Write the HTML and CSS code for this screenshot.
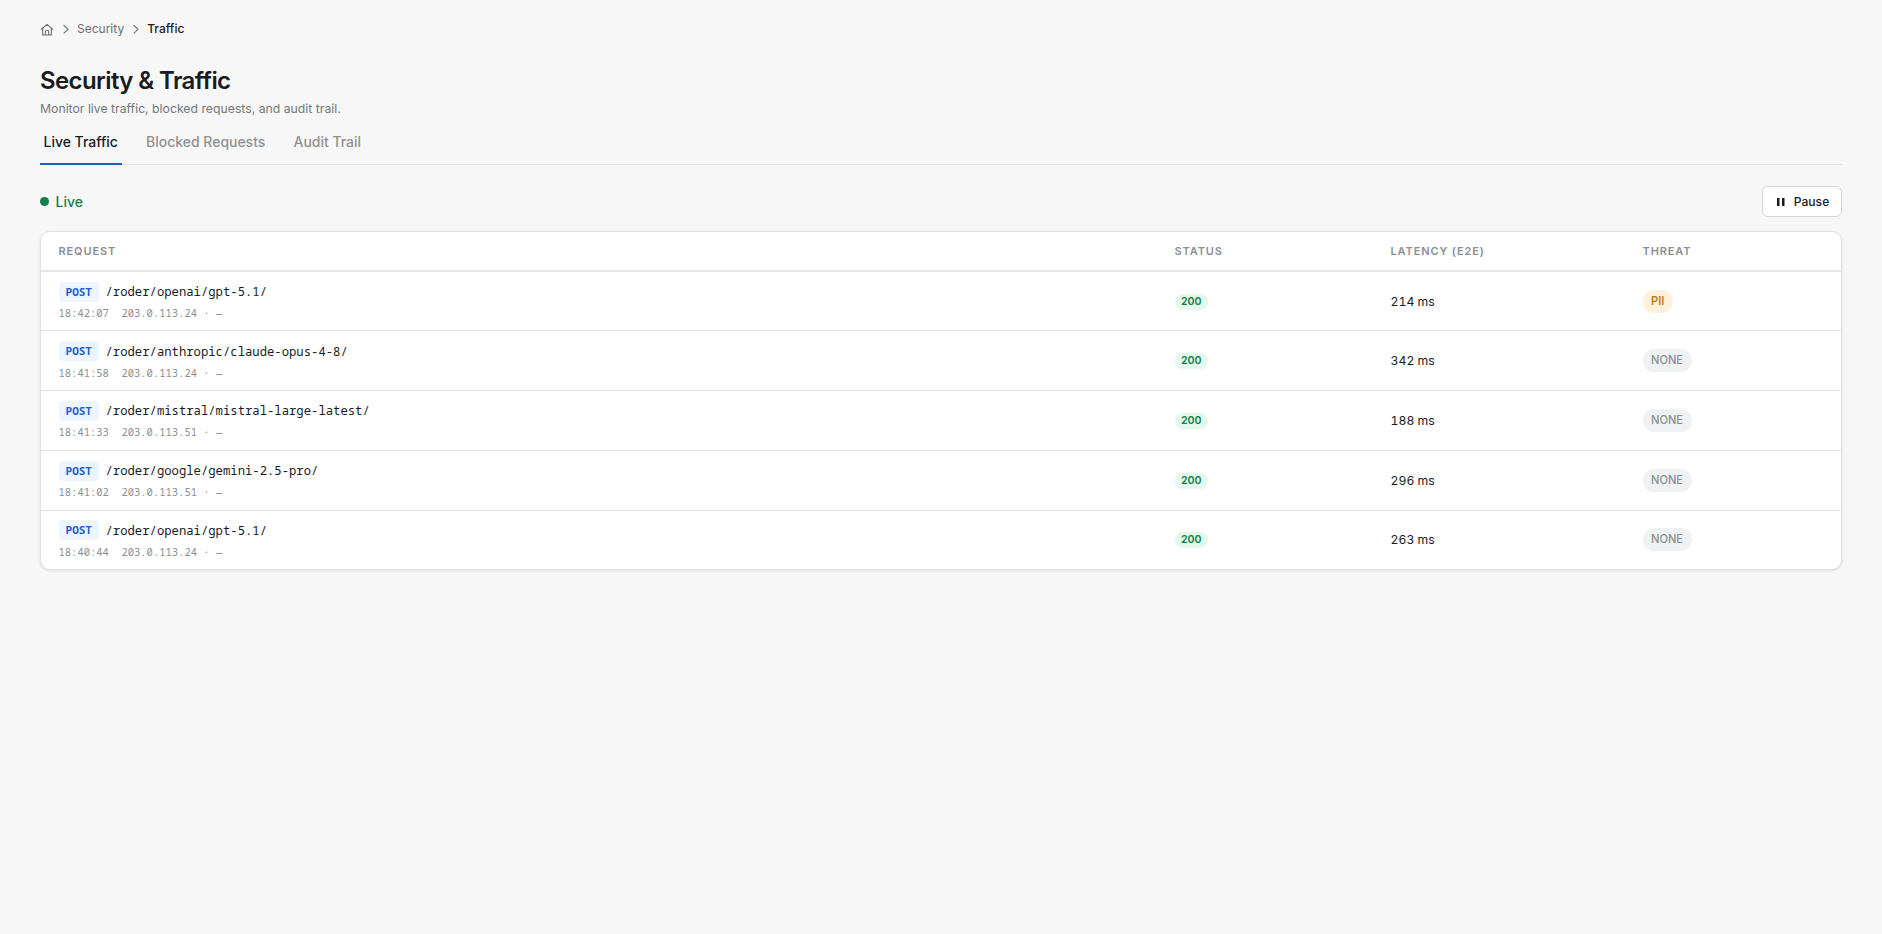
FILE: index.html
```html
<!DOCTYPE html>
<html lang="en">
<head>
<meta charset="utf-8">
<title>Security &amp; Traffic</title>
<link rel="stylesheet" href="styles.css">
</head>
<body>
<main class="page">
  <nav class="crumbs">
    <svg class="home" viewBox="0 0 24 24" fill="none" stroke="currentColor" stroke-width="2" stroke-linecap="round" stroke-linejoin="round"><path d="M1.500 11.500 12 2.500l10.500 9M4 10v12h16V10M9 21.500v-5a3 3 0 0 1 6 0v5"/></svg>
    <svg class="chev" viewBox="0 0 12 12" fill="none" stroke="currentColor" stroke-width="1.200" stroke-linecap="round" stroke-linejoin="round"><path d="m4 2.500 4 3.800-4 3.800"/></svg>
    <span class="crumb">Security</span>
    <svg class="chev" viewBox="0 0 12 12" fill="none" stroke="currentColor" stroke-width="1.200" stroke-linecap="round" stroke-linejoin="round"><path d="m4 2.500 4 3.800-4 3.800"/></svg>
    <span class="crumb current">Traffic</span>
  </nav>
  <h1 class="title">Security &amp; Traffic</h1>
  <p class="subtitle">Monitor live traffic, blocked requests, and audit trail.</p>
  <div class="tabs">
    <span class="tab active">Live Traffic</span>
    <span class="tab">Blocked Requests</span>
    <span class="tab">Audit Trail</span>
  </div>
  <div class="toolbar">
    <div class="live"><i class="dot"></i><span>Live</span></div>
    <button class="pause"><svg class="bars" viewBox="0 0 8 8" fill="currentColor"><path d="M0 0h2.500v8h-2.500zM5 0h2.500v8h-2.500z"/></svg><span>Pause</span></button>
  </div>
  <section class="card">
    <div class="row head"><span>Request</span><span>Status</span><span>Latency (E2E)</span><span>Threat</span></div>
    <div class="row first">
      <div class="request"><div class="line"><span class="method">POST</span><span class="path">/roder/openai/gpt-5.1/</span></div><div class="meta"><span>18:42:07</span><span>203.0.113.24 · —</span></div></div>
      <div class="cell"><span class="status">200</span></div><div class="latency">214 ms</div><div class="cell"><span class="threat pii">PII</span></div>
    </div>
    <div class="row">
      <div class="request"><div class="line"><span class="method">POST</span><span class="path">/roder/anthropic/claude-opus-4-8/</span></div><div class="meta"><span>18:41:58</span><span>203.0.113.24 · —</span></div></div>
      <div class="cell"><span class="status">200</span></div><div class="latency">342 ms</div><div class="cell"><span class="threat">NONE</span></div>
    </div>
    <div class="row">
      <div class="request"><div class="line"><span class="method">POST</span><span class="path">/roder/mistral/mistral-large-latest/</span></div><div class="meta"><span>18:41:33</span><span>203.0.113.51 · —</span></div></div>
      <div class="cell"><span class="status">200</span></div><div class="latency">188 ms</div><div class="cell"><span class="threat">NONE</span></div>
    </div>
    <div class="row">
      <div class="request"><div class="line"><span class="method">POST</span><span class="path">/roder/google/gemini-2.5-pro/</span></div><div class="meta"><span>18:41:02</span><span>203.0.113.51 · —</span></div></div>
      <div class="cell"><span class="status">200</span></div><div class="latency">296 ms</div><div class="cell"><span class="threat">NONE</span></div>
    </div>
    <div class="row">
      <div class="request"><div class="line"><span class="method">POST</span><span class="path">/roder/openai/gpt-5.1/</span></div><div class="meta"><span>18:40:44</span><span>203.0.113.24 · —</span></div></div>
      <div class="cell"><span class="status">200</span></div><div class="latency">263 ms</div><div class="cell"><span class="threat">NONE</span></div>
    </div>
  </section>
</main>
</body>
</html>
```
FILE: styles.css
```css
* { box-sizing: border-box; }
body { margin: 0; background: #f7f7f7; color: #1a1b1e; font-family: Inter, "Liberation Sans", sans-serif; }
.page { padding: 18px 40px; }
.crumbs { display: flex; align-items: center; height: 21px; font-size: 12px; color: #6b6f73; }
.home { width: 14px; height: 13px; margin-top: 1px; }
.chev { width: 12px; height: 12px; margin: 0 5px 0 6px; color: #7c8083; }
.crumb.current { color: #1a1b1e; font-weight: 500; }
.title { margin: 26px 0 0; font-size: 24px; line-height: 32px; font-weight: 600; letter-spacing: -0.600px; }
.subtitle { margin: 2px 0 0; font-size: 12.250px; line-height: 20px; color: #74787b; }
.tabs { display: flex; gap: 20.700px; height: 46px; border-bottom: 1px solid #e1e3e5; }
.tab { height: 46px; padding: 12px 4px 0 3.500px; font-size: 13.980px; line-height: 22px; font-weight: 500; color: #8d9194; }
.tab.active { color: #1a1b1e; border-bottom: 2px solid #1f5fb5; }
.toolbar { display: flex; align-items: center; justify-content: space-between; height: 31px; margin: 21px 0 14px; }
.live { display: flex; align-items: center; gap: 6.500px; color: #12804a; font-size: 13.950px; font-weight: 500; }
.dot { width: 9px; height: 9px; border-radius: 50%; background: #12804a; }
.pause { display: flex; align-items: center; justify-content: center; gap: 9px; width: 80px; height: 31px; padding: 0 0 0 2px; border: 1px solid #d3d6d9; border-radius: 6px; background: #fff; color: #1a1b1e; font: 500 12.100px Inter, sans-serif; }
.bars { width: 8px; height: 8px; }
.card { border: 1px solid #e0e2e4; border-radius: 10px; background: #fff; box-shadow: 0 1px 3px rgba(0, 0, 0, .1); overflow: hidden; }
.row { display: grid; grid-template-columns: 1116px 216px 252px 1fr; align-items: center; height: 59.800px; padding: 0 17.500px; border-bottom: 1px solid #e1e3e5; }
.row.first { height: 59.200px; }
.row:last-child { border-bottom: 0; height: 58.600px; }
.row.head { height: 40px; border-bottom: 2px solid #e3e5e7; font-size: 11px; font-weight: 600; letter-spacing: .880px; text-transform: uppercase; color: #8b8f92; }
.request { font-family: "Noto Sans Mono", "DejaVu Sans Mono", monospace; }
.line { display: flex; align-items: center; gap: 6.500px; height: 20px; margin-top: .600px; }
.method { width: 40.500px; height: 20px; border-radius: 4px; background: #edf5ff; color: #1a5fd0; font-size: 11px; line-height: 20px; font-weight: 700; text-align: center; }
.path { font-size: 12.240px; white-space: pre; }
.meta { display: flex; gap: 12.500px; height: 16px; margin-top: 3.400px; font-size: 10.500px; line-height: 16px; color: #8b8f92; }
.cell { display: flex; }
.status { height: 16px; margin-top: 1px; padding: 0 6.500px; border-radius: 8px; background: #e4f8ec; color: #12804a; font-size: 10.600px; line-height: 16px; font-weight: 600; }
.latency { font-size: 12.250px; line-height: 15px; font-variant-numeric: tabular-nums; }
.threat { height: 23px; padding: 0 9px 0 8.500px; border-radius: 12px; background: #f0f1f3; color: #8b8f92; font-size: 11.100px; line-height: 23px; font-weight: 500; }
.threat.pii { background: #fff1dc; color: #c47a14; font-weight: 600; }
```
